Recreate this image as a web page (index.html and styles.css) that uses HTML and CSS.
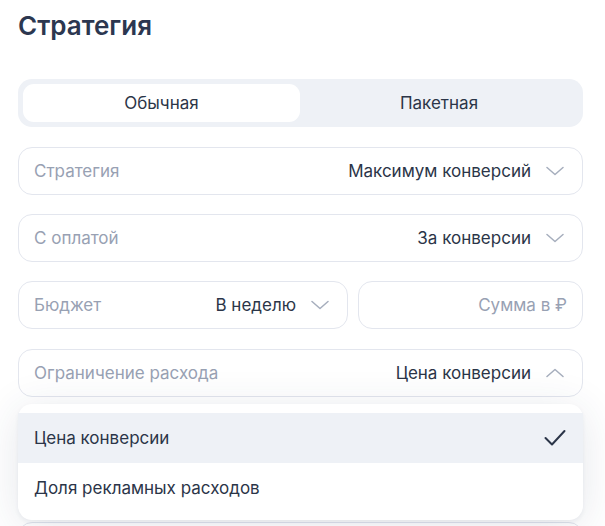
FILE: index.html
```html
<!DOCTYPE html>
<html lang="ru">
<head>
<meta charset="utf-8">
<link rel="stylesheet" href="styles.css">
</head>
<body>
<div class="panel">
  <h1 class="title">Стратегия</h1>
  <div class="segmented">
    <div class="seg seg-active">Обычная</div>
    <div class="seg">Пакетная</div>
  </div>
  <div class="field">
    <span class="label">Стратегия</span>
    <span class="value">Максимум конверсий</span>
    <svg class="chev" viewBox="0 0 18 10" width="18" height="10"><path d="M1 1.5 L9 8.5 L17 1.5" fill="none" stroke="currentColor" stroke-width="1.5" stroke-linecap="round" stroke-linejoin="round"/></svg>
  </div>
  <div class="field">
    <span class="label">С оплатой</span>
    <span class="value">За конверсии</span>
    <svg class="chev" viewBox="0 0 18 10" width="18" height="10"><path d="M1 1.5 L9 8.5 L17 1.5" fill="none" stroke="currentColor" stroke-width="1.5" stroke-linecap="round" stroke-linejoin="round"/></svg>
  </div>
  <div class="row">
    <div class="field field-budget">
      <span class="label">Бюджет</span>
      <span class="value">В неделю</span>
      <svg class="chev" viewBox="0 0 18 10" width="18" height="10"><path d="M1 1.5 L9 8.5 L17 1.5" fill="none" stroke="currentColor" stroke-width="1.5" stroke-linecap="round" stroke-linejoin="round"/></svg>
    </div>
    <div class="field field-sum">
      <span class="placeholder">Сумма в ₽</span>
    </div>
  </div>
  <div class="field field-open">
    <span class="label">Ограничение расхода</span>
    <span class="value">Цена конверсии</span>
    <svg class="chev" viewBox="0 0 18 10" width="18" height="10"><path d="M1 8.5 L9 1.5 L17 8.5" fill="none" stroke="currentColor" stroke-width="1.5" stroke-linecap="round" stroke-linejoin="round"/></svg>
  </div>
  <div class="dropdown">
    <div class="option option-selected">
      <span>Цена конверсии</span>
      <svg class="check" viewBox="0 0 22 18" width="22" height="18"><path d="M1.5 9 L8 15.5 L20.5 2" fill="none" stroke="currentColor" stroke-width="2" stroke-linecap="round" stroke-linejoin="round"/></svg>
    </div>
    <div class="option">
      <span>Доля рекламных расходов</span>
    </div>
  </div>
  <div class="field field-under"></div>
</div>
</body>
</html>
```
FILE: styles.css
```css
* { box-sizing: border-box; }
html, body { margin: 0; padding: 0; background: #ffffff; }
body {
  font-family: "Inter", "Liberation Sans", sans-serif;
  color: #2b3548;
  width: 605px;
  height: 526px;
  overflow: hidden;
}
.panel {
  padding: 9px 22px 0 18px;
  display: flex;
  flex-direction: column;
}
.title {
  margin: 0 0 37px 0;
  font-size: 26px;
  line-height: 33px;
  font-weight: 600;
  color: #2c3750;
}
.segmented {
  height: 48px;
  background: #eef1f6;
  border-radius: 14px;
  padding: 5px;
  display: flex;
}
.seg {
  flex: 1;
  display: flex;
  align-items: center;
  justify-content: center;
  font-size: 17px;
  border-radius: 11px;
  color: #2b3548;
}
.seg-active { background: #ffffff; flex: 0 0 277px; }
.field {
  height: 48px;
  border: 1px solid #e3e6ee;
  border-radius: 14px;
  display: flex;
  align-items: center;
  padding: 0 18px 0 15px;
  margin-top: 20px;
  font-size: 17px;
  background: #ffffff;
}
.field + .field, .row + .field, .field + .row { margin-top: 19px; }
.segmented + .field { margin-top: 20px; }
.row + .field-open { margin-top: 20px; }
.label { color: #98a1b3; flex: 1; }
.value { color: #2b3548; }
.chev { color: #a6aebd; margin-left: 15px; flex: none; }
.row { display: flex; gap: 10px; }
.row .field { margin-top: 0; }
.field-budget { width: 330px; flex: none; }
.field-sum { flex: 1; justify-content: flex-end; padding-right: 15px; }
.placeholder { color: #98a1b3; }
.dropdown {
  position: relative;
  z-index: 2;
  margin-top: 7px;
  height: 116px;
  background: #ffffff;
  border-radius: 14px;
  padding: 9px 0;
  box-shadow: 0 2px 4px rgba(40, 55, 90, 0.06), 0 6px 44px rgba(40, 55, 90, 0.12);
}
.option {
  height: 49px;
  display: flex;
  align-items: center;
  justify-content: space-between;
  padding: 0 17px 0 16px;
  font-size: 17px;
  color: #2b3548;
}
.option-selected { background: #eef1f6; height: 50px; }
.check { color: #2b3548; }
.field-under { margin-top: 2px; }
```
